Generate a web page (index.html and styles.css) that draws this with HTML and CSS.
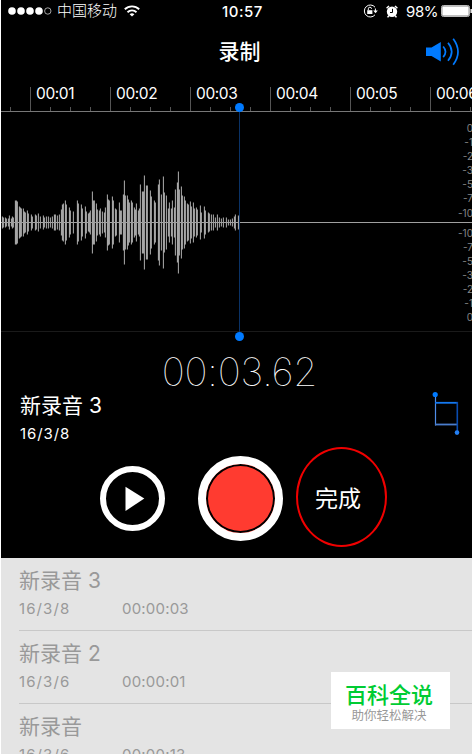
FILE: index.html
```html
<!DOCTYPE html>
<html lang="zh-CN">
<head>
  <meta charset="UTF-8">
  <title>录制</title>
  <link rel="stylesheet" href="styles.css">
</head>
<body>

  <div class="phone">
    <div class="status-bar">
      <div class="status-left">
        <svg class="signal" width="44" height="10" viewBox="0 0 44 10">
          <g fill="#fff">
            <circle cx="4" cy="5" r="3.8"/>
            <circle cx="13" cy="5" r="3.8"/>
            <circle cx="22" cy="5" r="3.8"/>
            <circle cx="31" cy="5" r="3.8"/>
          </g>
          <circle cx="39.8" cy="5" r="3.2" fill="none" stroke="#ccc" stroke-width="0.8"/>
        </svg>
        <span class="carrier">中国移动</span>
        <svg class="wifi" width="16" height="12" viewBox="0 0 16 12" fill="none" stroke="#fff" stroke-width="1.9">
          <path d="M0.8 4.3a10.4 10.4 0 0 1 14.4 0M3.5 7.2a6.5 6.5 0 0 1 9 0"/>
          <path d="M8 11.6L5.6 9.3a3.5 3.5 0 0 1 4.8 0z" fill="#fff" stroke="none"/>
        </svg>
      </div>
      <span class="clock">10:57</span>
      <div class="status-right">
        <svg class="lock" width="15" height="14" viewBox="0 0 15 14" fill="none" stroke="#fff">
          <path d="M12 3.2A6 6 0 1 0 12 10.8M12.4 4.5V8"/>
          <path d="M10.2 6.4h4.6l-2.3 2.8z" fill="#fff" stroke="none"/>
          <path d="M4.2 6.2h5.2v3.8H4.2z" fill="#fff" stroke="none"/>
          <path d="M5.3 6V4.8a1.6 1.6 0 0 1 3.2 0"/>
        </svg>
        <svg class="alarm" width="12" height="13" viewBox="0 0 12 13">
          <circle cx="6" cy="6.8" r="5.2" fill="#fff"/>
          <path d="M0.6 3.2L3 1M11.4 3.2L9 1M2.8 10.6L1.6 12.4M9.2 10.6l1.2 1.8" stroke="#fff" stroke-width="1.5"/>
          <path d="M6.5 3.8v3.7H4" fill="none" stroke="#000"/>
        </svg>
        <span class="percent">98%</span>
        <svg class="battery" width="31" height="12" viewBox="0 0 31 12">
          <rect x="0.5" y="0.5" width="28" height="11" rx="1.8" fill="none" stroke="#bbb"/>
          <rect x="1.2" y="1.2" width="26.6" height="9.6" rx="0.8" fill="#fff"/>
          <path d="M29.4 4h1.6v4h-1.6z" fill="#ddd"/>
        </svg>
      </div>
    </div>

    <div class="nav">
      <h1>录制</h1>
      <svg class="speaker" width="35" height="28" viewBox="0 0 35 28" fill="none" stroke="#007aff" stroke-width="1.7">
        <path d="M0 9.5h5.5L14.8 4v19.5L5.5 18H0z" fill="#007aff" stroke="none"/>
        <path d="M17.2 8.5q4.6 5.3 0 10.6M22 4.8q7.4 9 0 18M27.2 0.8q9.6 13 0 26"/>
      </svg>
    </div>

    <div class="ruler">
      <div class="second"></div>
      <div class="second">00:01</div>
      <div class="second">00:02</div>
      <div class="second">00:03</div>
      <div class="second">00:04</div>
      <div class="second">00:05</div>
      <div class="second">00:06</div>
    </div>

    <div class="waveform">
      <svg width="471" height="219" viewBox="0 0 471 219">
        <path id="bars" stroke="#a6a6a6" stroke-width="1.05"/>
        <path d="M0 110.5H471" stroke="#a0a0a0"/>
      </svg>
      <div class="levels">
        <div class="level-group">
          <span>0</span><span>-1</span><span>-2</span><span>-3</span><span>-5</span><span>-7</span><span>-10</span>
        </div>
        <div class="level-group">
          <span>-10</span><span>-7</span><span>-5</span><span>-3</span><span>-2</span><span>-1</span><span>0</span>
        </div>
      </div>
      <div class="playhead"></div>
    </div>

    <div class="timer">00:03.62</div>

    <div class="current">
      <div>
        <h2>新录音 3</h2>
        <p>16/3/8</p>
      </div>
      <svg class="trim" width="28" height="44" viewBox="0 0 28 44" fill="none">
        <path d="M3.5 3v31.5" stroke="#4f8de8" stroke-width="1.2"/>
        <path d="M3 11.8h23" stroke="#1478f0" stroke-width="1.8"/>
        <path d="M3 33.5h23" stroke="#4a7dcc" stroke-width="1.8"/>
        <path d="M25.3 11v30" stroke="#0a4cb0" stroke-width="1.6"/>
        <circle cx="3.2" cy="3.5" r="2.6" fill="#007aff"/>
        <circle cx="25" cy="41.6" r="2.3" fill="#2480f5"/>
      </svg>
    </div>

    <div class="controls">
      <button class="play">
        <svg width="20" height="26" viewBox="0 0 20 26"><path d="M0.5 0.8L19.3 12.6L0.5 25z" fill="#fff"/></svg>
      </button>
      <button class="record"></button>
      <button class="done">完成</button>
    </div>

    <div class="recordings">
      <div class="recording">
        <h3>新录音 3</h3>
        <div class="meta"><span>16/3/8</span><span>00:00:03</span></div>
      </div>
      <div class="recording">
        <h3>新录音 2</h3>
        <div class="meta"><span>16/3/6</span><span>00:00:01</span></div>
      </div>
      <div class="recording">
        <h3>新录音</h3>
        <div class="meta"><span>16/3/6</span><span>00:00:13</span></div>
      </div>
    </div>

    <div class="watermark">
      <strong>百科全说</strong>
      <span>助你轻松解决</span>
    </div>
  </div>

  <script>
    // x position and half height of every bar
    const samples = [
      [1,6],[2,5],[4,5],[5,4],[7,4],[8,7],[10,4],[11,6],[12,5],[14,22],[15,22],[16,21],[18,16],[19,15],[20,14],
      [22,14],[23,11],[24,10],[26,12],[27,9],[30,8],[31,6],[34,8],[35,7],[37,9],[39,6],[42,7],[43,5],[45,6],
      [47,6],[49,5],[51,6],[53,8],[54,8],[56,7],[58,8],[60,13],[61,18],[62,19],[64,22],[65,18],[68,15],[69,12],
      [72,11],[76,22],[77,19],[80,18],[81,14],[84,16],[85,11],[87,9],[88,10],[89,12],[91,31],[92,22],[93,22],
      [95,19],[96,13],[98,12],[99,14],[101,11],[103,10],[104,15],[106,28],[107,23],[108,22],[111,26],[112,22],
      [114,14],[115,13],[118,20],[119,12],[120,12],[122,28],[123,42],[124,27],[126,27],[127,23],[128,20],
      [130,22],[131,20],[133,15],[134,13],[135,19],[137,12],[138,14],[139,38],[141,31],[142,31],[143,47],
      [145,37],[146,37],[149,32],[150,26],[153,22],[154,20],[157,38],[158,43],[160,28],[162,46],[163,30],
      [165,27],[167,14],[168,20],[170,14],[171,22],[173,15],[174,33],[176,40],[177,51],[178,33],[180,36],
      [181,27],[183,26],[184,22],[186,19],[187,18],[189,21],[190,16],[192,20],[193,14],[195,15],[196,13],
      [199,17],[200,10],[203,16],[204,12],[207,10],[208,9],[210,8],[212,8],[214,5],[216,8],[218,5],[220,4],
      [222,5],[225,5],[227,3],[229,3],[231,4],[233,6],[234,8],[237,7],[238,6]
    ];
    document.getElementById('bars').setAttribute('d',
      samples.map(([x, h]) => `M${x + 0.4} ${110.5 - h}v${h * 2}`).join(''));
  </script>

</body>
</html>
```
FILE: styles.css
```css
* {
  box-sizing: border-box;
}

body {
  margin: 0;
  background: #fff;
  font-family: Inter, "Noto Sans CJK SC", sans-serif;
}

h1, h2, h3, p {
  margin: 0;
  font-weight: 400;
}

svg {
  display: block;
  flex-shrink: 0;
}

.phone {
  position: relative;
  width: 471px;
  height: 754px;
  margin-left: 1px;
  background: #000;
  color: #fff;
  overflow: hidden;
}

.status-bar {
  display: grid;
  grid-template-columns: 200px 83px 188px;
  align-items: center;
  height: 22px;
  font-size: 15px;
}

.status-left,
.status-right {
  display: flex;
  align-items: center;
}

.status-left {
  padding-left: 7px;
}

.carrier {
  margin: 0 7px 0 5px;
  font-size: 15px;
  font-weight: 300;
  line-height: 22px;
}

.clock {
  text-align: center;
  font-weight: 500;
  letter-spacing: 0.5px;
}

.status-right {
  padding-left: 79px;
}

.alarm {
  margin-left: 8px;
}

.percent {
  width: 35px;
  margin-left: 8px;
  letter-spacing: -0.4px;
}

/* Title bar */
.nav {
  display: grid;
  grid-template-columns: 60px 1fr 60px;
  align-items: center;
  height: 65px;
  padding-bottom: 6px;
}

.nav h1 {
  grid-column: 2;
  padding-left: 6px;
  font-size: 21px;
  font-weight: 500;
  line-height: 30px;
  text-align: center;
}

.speaker {
  margin-left: 14px;
}

/* Time ruler */
.ruler {
  display: flex;
  height: 25px;
  margin-left: -51px;
  border-bottom: 1px solid #777;
}

.second {
  flex: 0 0 80px;
  padding-left: 5px;
  border-left: 1px solid #555;
  background: repeating-linear-gradient(to right, transparent 0 19px, #555 19px 20px) 0 100% / 79px 4px no-repeat;
  font-size: 15.5px;
  line-height: 14px;
  letter-spacing: -0.4px;
}

.waveform {
  position: relative;
  height: 220px;
  border-bottom: 1px solid #1a1a1a;
}

.levels {
  position: absolute;
  top: 9px;
  right: -1px;
  color: #858585;
  font-size: 10px;
  line-height: 14.1px;
  text-align: right;
}

.level-group span {
  display: block;
}

.level-group + .level-group {
  margin-top: 6px;
}

.playhead {
  position: absolute;
  top: -4px;
  left: 238px;
  width: 1px;
  height: 228px;
  background: #0a3266;
}

.playhead::before,
.playhead::after {
  content: "";
  position: absolute;
  left: -4px;
  width: 9px;
  height: 9px;
  border-radius: 50%;
  background: #007aff;
}

.playhead::before {
  top: -5px;
}

.playhead::after {
  bottom: -5px;
}

.timer {
  height: 59px;
  padding: 16px 0 0 6px;
  font-size: 39px;
  font-weight: 100;
  line-height: 48px;
  letter-spacing: -0.2px;
  text-align: center;
}

.current {
  display: flex;
  justify-content: space-between;
  height: 58px;
  padding: 0 12px 0 19px;
}

.current h2 {
  font-size: 21px;
  line-height: 30px;
}

.current p {
  padding-top: 3px;
  font-size: 15px;
  line-height: 20px;
  letter-spacing: 0.9px;
}

.controls {
  display: flex;
  align-items: center;
  height: 109px;
  padding: 0 0 10px 99px;
}

button {
  padding: 0;
  border: none;
  background: none;
  color: #fff;
  font-family: inherit;
  cursor: pointer;
}

.play {
  display: flex;
  align-items: center;
  justify-content: center;
  width: 65px;
  height: 65px;
  padding-left: 5px;
  border: 6px solid #fff;
  border-radius: 50%;
}

.record {
  width: 85px;
  height: 85px;
  margin-left: 33px;
  border: 8px solid #fff;
  border-radius: 50%;
  background: #ff3b30;
  box-shadow: inset 0 0 0 2px #000;
}

.done {
  width: 91px;
  height: 100px;
  margin: -3px 0 0 13px;
  padding-right: 7px;
  border: 2px solid #f00000;
  border-radius: 50%;
  font-size: 23px;
}

/* Saved recordings */
.recordings {
  height: 196px;
  background: #e4e4e4;
  color: #999;
}

.recording {
  height: 73px;
  margin-left: 18px;
  padding-top: 8px;
  border-bottom: 1px solid #c8c8c8;
}

.recording h3 {
  font-size: 21px;
  line-height: 30px;
}

.meta {
  display: grid;
  grid-template-columns: 103px 1fr;
  padding-top: 3px;
  font-size: 15px;
  line-height: 20px;
  letter-spacing: 0.2px;
}

.meta span:first-child {
  letter-spacing: 1.1px;
}

.watermark {
  position: absolute;
  top: 672px;
  left: 330px;
  display: flex;
  flex-direction: column;
  align-items: center;
  width: 119px;
  height: 57px;
  padding: 9px 3px 0 0;
  background: #fff;
  line-height: 1;
}

.watermark strong {
  color: #0c3;
  font-size: 22px;
  font-weight: 500;
  line-height: 28px;
}

.watermark span {
  color: #999;
  font-size: 12.5px;
  line-height: 14px;
}
```
